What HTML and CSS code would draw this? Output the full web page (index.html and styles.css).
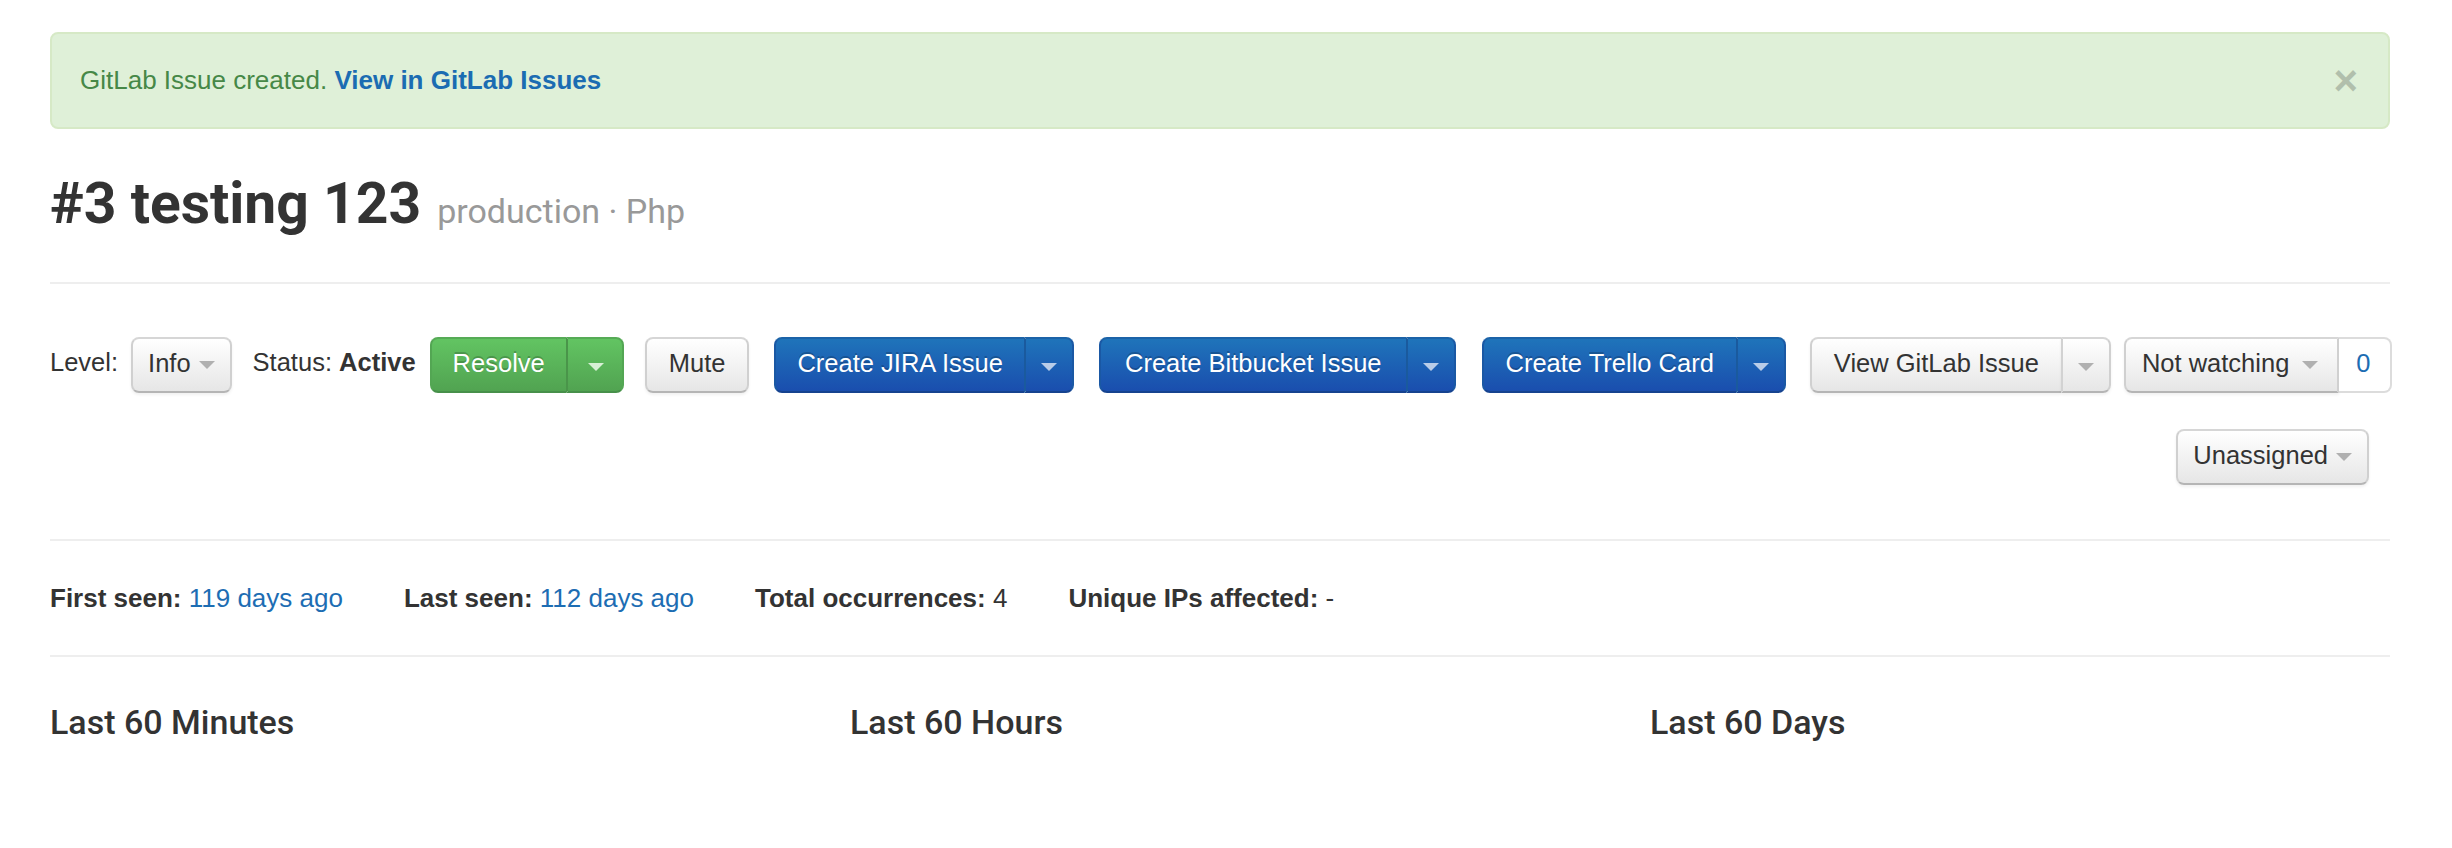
FILE: index.html
```html
<!DOCTYPE html>
<html>
<head>
<meta charset="utf-8">
<title>#3 testing 123</title>
<link rel="stylesheet" href="styles.css">
</head>
<body>
<div class="page">
  <div class="alert">
    <span>GitLab Issue created. <a class="alert-link" href="#">View in GitLab Issues</a></span>
    <span class="close">×</span>
  </div>

  <h1 class="title">#3 testing 123<small class="subtitle">production · Php</small></h1>

  <div class="toolbar">
    <span class="label">Level:</span>
    <span class="btn btn-default btn-drop ml-13">Info<i class="caret caret-gray"></i></span>
    <span class="label ml-21">Status: <b>Active</b></span>
    <span class="btn-group ml-14">
      <span class="btn btn-success btn-first">Resolve</span>
      <span class="btn btn-success btn-toggle btn-toggle-wide"><i class="caret caret-green"></i></span>
    </span>
    <span class="btn btn-default btn-mute ml-21">Mute</span>
    <span class="btn-group ml-25">
      <span class="btn btn-primary btn-first">Create JIRA Issue</span>
      <span class="btn btn-primary btn-toggle"><i class="caret caret-blue"></i></span>
    </span>
    <span class="btn-group ml-25">
      <span class="btn btn-primary btn-first btn-wide">Create Bitbucket Issue</span>
      <span class="btn btn-primary btn-toggle"><i class="caret caret-blue"></i></span>
    </span>
    <span class="btn-group ml-26">
      <span class="btn btn-primary btn-first btn-trello">Create Trello Card</span>
      <span class="btn btn-primary btn-toggle"><i class="caret caret-blue"></i></span>
    </span>
    <span class="btn-group ml-24">
      <span class="btn btn-default btn-first btn-view">View GitLab Issue</span>
      <span class="btn btn-default btn-toggle"><i class="caret caret-gray"></i></span>
    </span>
    <span class="btn-group ml-13">
      <span class="btn btn-default btn-first btn-drop btn-split">Not watching<i class="caret caret-gray"></i></span>
      <span class="btn btn-count">0</span>
    </span>
  </div>
  <div class="toolbar-right">
    <span class="btn btn-default btn-drop">Unassigned<i class="caret caret-gray"></i></span>
  </div>

  <div class="meta">
    <span class="meta-item"><b>First seen:</b> <a href="#">119 days ago</a></span>
    <span class="meta-item"><b>Last seen:</b> <a href="#">112 days ago</a></span>
    <span class="meta-item"><b>Total occurrences:</b> 4</span>
    <span class="meta-item"><b>Unique IPs affected:</b> -</span>
  </div>

  <div class="charts">
    <h3 class="chart-title">Last 60 Minutes</h3>
    <h3 class="chart-title">Last 60 Hours</h3>
    <h3 class="chart-title">Last 60 Days</h3>
  </div>
</div>
</body>
</html>
```

FILE: styles.css
```css
html, body {
  margin: 0;
  padding: 0;
  background: #fff;
}
body {
  font-family: "Liberation Sans", Arial, Helvetica, sans-serif;
  font-size: 25.5px;
  color: #333;
}
a {
  color: #1d6db3;
  text-decoration: none;
}
.page {
  width: 2340px;
  margin-left: 50px;
  padding-top: 32px;
}

/* alert */
.alert {
  box-sizing: border-box;
  height: 97px;
  display: flex;
  align-items: center;
  justify-content: space-between;
  padding: 0 30px 0 28px;
  background: #dff0d8;
  border: 2px solid #d6e9c6;
  border-radius: 8px;
  color: #468847;
  font-size: 26px;
}
.alert-link {
  font-weight: bold;
  color: #1b6cb2;
}
.close {
  font-size: 42px;
  font-weight: bold;
  line-height: 40px;
  color: #000;
  opacity: 0.2;
}

/* title */
.title {
  margin: 43px 0 0;
  padding-bottom: 39px;
  border-bottom: 2px solid #eee;
  font-family: Roboto, "Noto Sans", sans-serif;
  font-weight: 700;
  font-size: 57px;
  line-height: 64px;
  letter-spacing: 0;
  color: #333;
}
.subtitle {
  margin-left: 16px;
  font-family: Roboto, "Noto Sans", sans-serif;
  font-weight: 400;
  font-size: 34px;
  color: #999;
}

/* toolbar */
.toolbar {
  display: flex;
  align-items: center;
  margin-top: 53px;
}
.toolbar-right {
  display: flex;
  justify-content: flex-end;
  padding-right: 21px;
  margin-top: 36px;
}
.label {
  margin-bottom: 6px;
  white-space: nowrap;
}
.ml-13 { margin-left: 13px; }
.ml-14 { margin-left: 14px; }
.ml-21 { margin-left: 21px; }
.ml-24 { margin-left: 24px; }
.ml-25 { margin-left: 25px; }
.ml-26 { margin-left: 26px; }

.btn-group {
  display: flex;
}
.btn {
  box-sizing: border-box;
  display: inline-flex;
  align-items: center;
  height: 56px;
  padding: 0 21px 3px;
  line-height: 49px;
  border: 2px solid;
  border-radius: 8px;
  white-space: nowrap;
  font-size: 25.5px;
}
.btn-wide { padding-left: 24px; padding-right: 24px; }
.btn-trello { padding-left: 22px; padding-right: 22px; }
.btn-view { padding-left: 22px; padding-right: 22px; }
.btn-mute { padding-left: 22px; padding-right: 22px; }
.btn-default {
  color: #333;
  background: linear-gradient(#ffffff, #e6e6e6);
  border-color: #d6d6d6 #d0d0d0 #b5b5b5;
  box-shadow: inset 0 2px 0 rgba(255,255,255,0.2), 0 2px 3px rgba(0,0,0,0.06);
}
.btn-success {
  color: #fff;
  background: linear-gradient(#62c462, #51a351);
  border-color: #56ab56 #53a653 #47904a;
  text-shadow: 0 -2px 0 rgba(0,0,0,0.2);
}
.btn-primary {
  color: #fff;
  background: linear-gradient(#1f74ba, #1a4eae);
  border-color: #1b63a8 #1a58a4 #16438f;
  text-shadow: 0 -2px 0 rgba(0,0,0,0.2);
}
.btn-drop {
  padding-left: 15px;
  padding-right: 15px;
}
.btn-first {
  border-right-width: 0;
  border-top-right-radius: 0;
  border-bottom-right-radius: 0;
}
.btn-toggle {
  padding: 0 15px 0 15px;
  border-left-width: 2px;
  border-top-left-radius: 0;
  border-bottom-left-radius: 0;
}
.btn-toggle-wide {
  padding: 0 18px 0 20px;
}
.btn-success.btn-toggle { border-left-color: #4a954a; }
.btn-primary.btn-toggle { border-left-color: #1a5a9e; }
.btn-default.btn-toggle { border-left-color: #d2d2d2; }
.btn-count {
  padding: 0 19px 3px 17px;
  color: #1d6db3;
  background: #fff;
  border-color: #dcdcdc;
  border-left-width: 0;
  border-top-left-radius: 0;
  border-bottom-left-radius: 0;
}
.btn-split {
  border-right-width: 2px;
  border-right-color: #d0d0d0;
  padding-left: 16px;
  padding-right: 19px;
}

.caret {
  display: inline-block;
  width: 0;
  height: 0;
  border-left: 8px solid transparent;
  border-right: 8px solid transparent;
  border-top: 8px solid #b3b3b3;
  margin-top: 3px;
}
.btn-drop .caret { margin-left: 8px; }
.btn-split .caret { margin-left: 13px; }
.caret-gray { border-top-color: #b0b0b0; }
.caret-green { border-top-color: #d8f0d6; }
.caret-blue { border-top-color: #b9cde9; }

/* meta */
.meta {
  margin-top: 54px;
  border-top: 2px solid #eee;
  border-bottom: 2px solid #eee;
  padding: 37px 0 37px;
  line-height: 40px;
  font-size: 26px;
  display: flex;
}
.meta-item {
  margin-right: 61px;
}

/* charts */
.charts {
  display: grid;
  grid-template-columns: 740px 740px 740px;
  column-gap: 60px;
  margin-top: 45px;
}
.chart-title {
  margin: 0;
  font-family: Roboto, "Noto Sans", sans-serif;
  font-weight: 500;
  font-size: 34px;
  line-height: 40px;
  color: #333;
}
```
